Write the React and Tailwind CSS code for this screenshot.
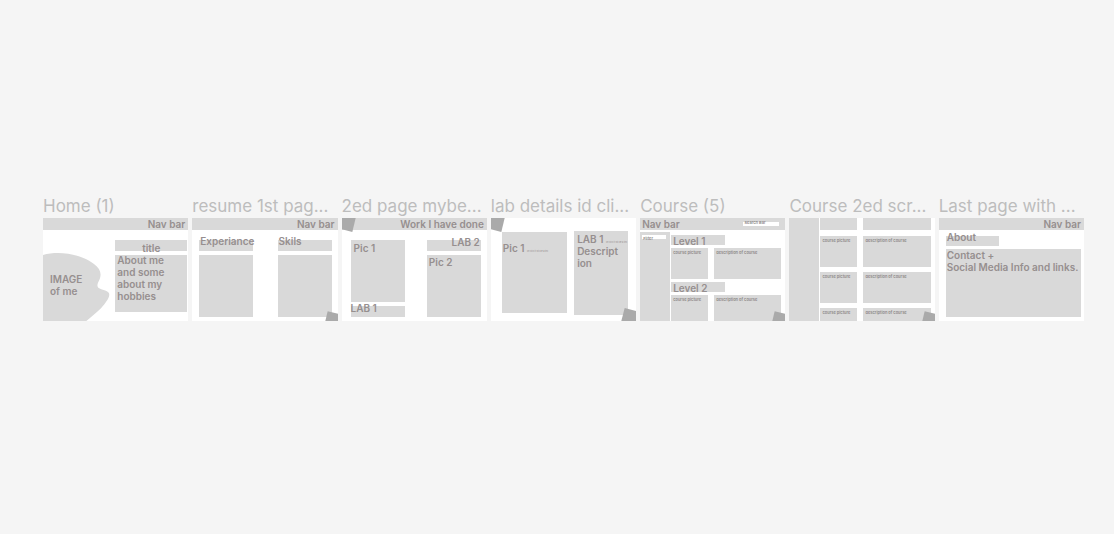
const FRAME =
  "relative flex h-[103px] w-full flex-col overflow-hidden bg-white text-[10px] leading-3 font-semibold text-[#968f8f]";
const TINY = "text-[4px] leading-[4px] font-semibold text-[#8c8787]";
const NOTE = "inline-block align-baseline text-[2px] leading-[2px] font-normal";

function Frame({ title, children, corners = [] }) {
  return (
    <section className="min-w-0">
      <h2 className="h-[23px] truncate text-[17px] leading-[23px] font-normal text-[#bdbdbd]">
        {title}
      </h2>
      <div className={FRAME}>
        {children}
        {corners.includes("top") && (
          <svg className="absolute top-0 left-0" width="14" height="14" viewBox="0 0 42 42" aria-hidden="true">
            <path d="M0 0H41L31 42L0 34Z" fill="#aaaaaa" />
          </svg>
        )}
        {corners.includes("bottom") && (
          <svg className="absolute right-0 bottom-0" width="13" height="10" viewBox="0 0 39 30" aria-hidden="true">
            <path d="M8 1L39 8V30H1Z" fill="#aaaaaa" />
          </svg>
        )}
        {corners.includes("bottomLarge") && (
          <svg className="absolute right-0 bottom-0" width="15" height="13" viewBox="0 0 45 39" aria-hidden="true">
            <path d="M11 0L45 9V39H1Z" fill="#aaaaaa" />
          </svg>
        )}
      </div>
    </section>
  );
}

function NavBar({ children = "Nav bar" }) {
  return <div className="h-3 shrink-0 bg-[#d9d9d9] pr-[3px] text-right whitespace-nowrap">{children}</div>;
}

function Block({ className = "", children }) {
  return <div className={`bg-[#d9d9d9] ${className}`}>{children}</div>;
}

function CourseRow({ className = "h-[31px]", empty = false }) {
  return (
    <div className={`flex shrink-0 gap-[6px] pr-1 whitespace-nowrap ${TINY} ${className}`}>
      <Block className="w-[37px] pt-[3px] pl-[2px]">{!empty && "course picture"}</Block>
      <Block className="flex-1 pt-[3px] pl-[2px]">{!empty && "description of course"}</Block>
    </div>
  );
}

function Level({ children }) {
  return <Block className="h-[10px] w-[54px] shrink-0 pl-[2px]">{children}</Block>;
}

function Home() {
  return (
    <Frame title="Home (1)">
      <NavBar />
      <div className="flex flex-1 justify-between pr-px">
        <div className="relative flex w-[67px] flex-col justify-end">
          <svg width="67" height="68" viewBox="0 0 201 204" aria-hidden="true">
            <path
              d="M0 6C52 -8 117 5 153 33C170 45 176 59 171 76C167 88 159 96 166 104C176 112 194 111 198 121C202 132 190 148 174 166C157 182 143 193 130 204H0Z"
              fill="#d9d9d9"
            />
          </svg>
          <p className="absolute top-[43px] left-[7px] whitespace-nowrap">
            IMAGE
            <br />
            of me
          </p>
        </div>
        <div className="flex w-[72px] flex-col gap-1 pt-[10px]">
          <Block className="h-[11px] pt-[2px] text-center">title</Block>
          <Block className="h-[57px] pl-[2px]">
            <p className="-mt-px">
              About me
              <br />
              and some
              <br />
              about my
              <br />
              hobbies
            </p>
          </Block>
        </div>
      </div>
    </Frame>
  );
}

function Resume() {
  return (
    <Frame title="resume 1st pag..." corners={["bottom"]}>
      <NavBar />
      <div className="flex justify-between pt-[10px] pr-[6px] pl-[7px]">
        {["Experiance", "Skils"].map((name) => (
          <div key={name} className="flex w-[54px] flex-col gap-1">
            <Block className="h-[11px] pl-px">
              <p className="-mt-[5px]">{name}</p>
            </Block>
            <Block className="h-[62px]" />
          </div>
        ))}
      </div>
    </Frame>
  );
}

function Work() {
  return (
    <Frame title="2ed page mybe..." corners={["top"]}>
      <NavBar>Work I have done</NavBar>
      <div className="flex justify-between pt-[10px] pr-[6px] pl-[9px]">
        <div className="flex w-[54px] flex-col gap-1">
          <Block className="h-[62px] pt-[2px] pl-[3px]">Pic 1</Block>
          <Block className="h-[11px]">
            <p className="-mt-1">LAB 1</p>
          </Block>
        </div>
        <div className="flex w-[54px] flex-col gap-1">
          <Block className="h-[11px] pr-px text-right">
            <p className="-mt-1">LAB 2</p>
          </Block>
          <Block className="h-[62px] pt-px pl-[2px]">Pic 2</Block>
        </div>
      </div>
    </Frame>
  );
}

function LabDetails() {
  return (
    <Frame title="lab details id cli..." corners={["top", "bottomLarge"]}>
      <div className="flex justify-between pt-[13px] pr-2 pl-[11px]">
        <Block className="mt-px h-[81px] w-[65px] pt-[10px] pl-px whitespace-nowrap">
          Pic 1 <span className={NOTE}>on click it will be a link</span>
        </Block>
        <Block className="h-[84px] w-[54px] pt-[2px] pl-[3px] whitespace-nowrap">
          LAB 1 <span className={NOTE}>on click it will be a link</span>
          <br />
          Descript
          <br />
          ion
        </Block>
      </div>
    </Frame>
  );
}

function Course() {
  return (
    <Frame title="Course (5)" corners={["bottom"]}>
      <div className="flex h-3 shrink-0 justify-between bg-[#d9d9d9] pr-[6px] pl-[2px]">
        <span>Nav bar</span>
        <label className={`flex w-[36px] flex-col pt-[3px] ${TINY}`}>
          <span className="relative pl-px">Search Bar</span>
          <input type="search" className="-mt-[3px] h-1 w-full appearance-none bg-white" />
        </label>
      </div>
      <div className="flex flex-1 gap-px pt-[2px]">
        <Block className="w-[30px] shrink-0 px-[2px] pt-[3px]">
          <label className={`flex w-6 flex-col-reverse ${TINY}`}>
            <span className="relative -mt-[2px] pl-px">Filter</span>
            <input type="text" className="h-1 w-full bg-white" />
          </label>
        </Block>
        <div className="flex flex-1 flex-col gap-[3px] pt-[3px]">
          <Level>Level 1</Level>
          <CourseRow />
          <Level>Level 2</Level>
          <CourseRow className="h-[26px]" />
        </div>
      </div>
    </Frame>
  );
}

function CourseScroll() {
  return (
    <Frame title="Course 2ed scr..." corners={["bottom"]}>
      <div className="flex flex-1 gap-px">
        <Block className="w-[30px] shrink-0" />
        <div className="flex flex-1 flex-col gap-[5px]">
          <CourseRow className="mb-px h-3" empty />
          <CourseRow />
          <CourseRow />
          <CourseRow className="h-[14px]" />
        </div>
      </div>
    </Frame>
  );
}

function LastPage() {
  return (
    <Frame title="Last page with ...">
      <NavBar />
      <div className="flex flex-col gap-[3px] pt-[6px] pr-[3px] pl-[7px]">
        <Block className="h-[10px] w-[53px] pl-px">
          <p className="-mt-[5px]">About</p>
        </Block>
        <Block className="h-[68px] pl-px whitespace-nowrap">
          Contact +
          <br />
          Social Media Info and links.
        </Block>
      </div>
    </Frame>
  );
}

export default function App() {
  return (
    <main className="min-h-screen bg-[#f5f5f5] pt-[195px] pr-[30px] pl-[43px] font-['Inter','Liberation_Sans',sans-serif]">
      <div className="grid grid-cols-7 gap-1">
        <Home />
        <Resume />
        <Work />
        <LabDetails />
        <Course />
        <CourseScroll />
        <LastPage />
      </div>
    </main>
  );
}
